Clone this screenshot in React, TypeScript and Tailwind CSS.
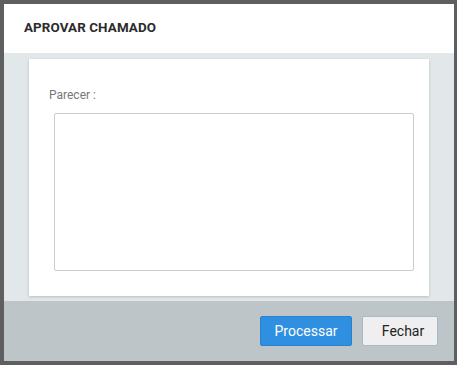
import React from 'react';

const App: React.FC = () => {
  return (
    <div className="w-[457px] h-[365px] bg-[#5f5f5f] pt-1 pl-1 pr-[3px] pb-1 font-['Roboto',sans-serif]">
      <div className="flex flex-col h-full">
        {/* Header */}
        <div className="h-[49px] bg-white flex items-center pl-5">
          <h1 className="text-[13.4px] font-bold text-[#2b2b2b] tracking-[0.1px]">APROVAR CHAMADO</h1>
        </div>

        {/* Body */}
        <div className="h-[248px] bg-[#e2e7ea] pt-[6px] px-[25px]">
          <div className="bg-white h-[237px] shadow-[0_1px_3px_rgba(0,0,0,0.18)] pl-5 pr-[15px] pt-[29px]">
            <label className="block text-[12px] text-[#777] leading-[14px]">Parecer :</label>
            <textarea className="block mt-[11px] ml-[5px] w-[360px] h-[158px] border border-[#ccc] rounded-[2px] resize-none outline-none" />
          </div>
        </div>

        {/* Footer */}
        <div className="flex-1 bg-[#bec5c8] flex justify-end items-start pt-[15px] pr-4 gap-[10px]">
          <button className="w-[92px] h-[30px] bg-[#2f8fe0] border border-[#2a80cc] rounded-[2px] text-white text-[14px]">
            Processar
          </button>
          <button className="w-[76px] h-[30px] bg-[#efefef] border border-[#a9b9c8] rounded-[2px] text-[#222] text-[14px] pl-[6px]">
            Fechar
          </button>
        </div>
      </div>
    </div>
  );
};

export default App;
